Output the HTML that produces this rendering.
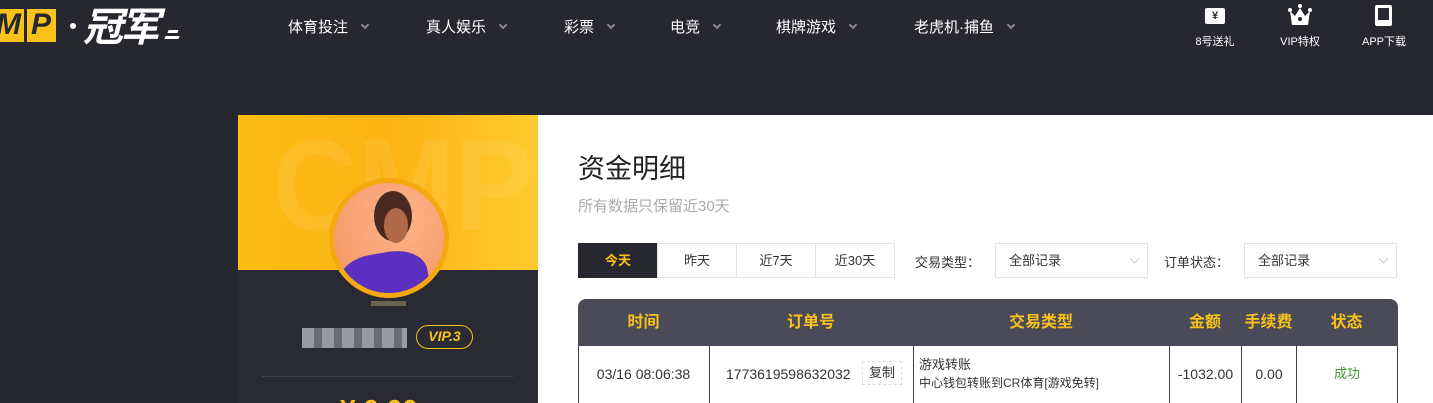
<!DOCTYPE html>
<html><head><meta charset="utf-8"><style>
*{margin:0;padding:0;box-sizing:border-box}
html,body{width:1433px;height:403px;overflow:hidden}
body{background:#272730;font-family:"Liberation Sans","Noto Sans CJK SC",sans-serif;position:relative}
.a{position:absolute}
.nav{color:#fff;font-size:15px;top:16px}
.nav i{display:inline-block;width:6px;height:6px;border-right:2px solid #888;border-bottom:2px solid #888;transform:rotate(45deg);margin-left:14px;position:relative;top:-4px}
.ico{color:#fff;font-size:11px;text-align:center;top:33px}
.btn{top:243px;height:35px;border:1px solid #e3e3e3;font-size:13px;color:#333;text-align:center;line-height:33px;background:#fff}
.sel{top:243px;height:35px;border:1px solid #e3e3e3;font-size:13px;color:#333;line-height:33px;padding-left:13px;width:153px}
.sel:after{content:"";position:absolute;right:9px;top:11px;width:6px;height:6px;border-right:1px solid #ccc;border-bottom:1px solid #ccc;transform:rotate(45deg)}
.th{top:299px;height:47px;line-height:47px;color:#f8c21a;font-weight:bold;font-size:16px;text-align:center}
.td{top:346px;height:57px;border-right:1px solid #3d3d48;font-size:14px;color:#333;text-align:center;line-height:56px}
</style></head><body>
<div class="a" style="left:0;top:9px;width:56px;height:33px;background:#f8c21a"></div>
<div class="a" style="left:-4px;top:8px;font:italic bold 30px 'Liberation Sans';color:#272730;letter-spacing:10px">MP</div>
<div class="a" style="left:24px;top:9px;width:3px;height:33px;background:#272730"></div>
<div class="a" style="left:70px;top:23px;width:6px;height:6px;border-radius:50%;background:#fff"></div>
<div class="a" style="left:83px;top:0px;font:italic bold 40px 'Noto Sans CJK SC',sans-serif;color:#fff;letter-spacing:-3px;line-height:48px">冠军</div>
<div class="a" style="left:168px;top:30px;width:10px;height:3px;background:#fff;transform:skewX(-20deg)"></div>
<div class="a" style="left:165px;top:36px;width:14px;height:3px;background:#fff;transform:skewX(-20deg)"></div>
<div class="a nav" style="left:288px">体育投注<i></i></div>
<div class="a nav" style="left:426px">真人娱乐<i></i></div>
<div class="a nav" style="left:564px">彩票<i></i></div>
<div class="a nav" style="left:670px">电竞<i></i></div>
<div class="a nav" style="left:776px">棋牌游戏<i></i></div>
<div class="a nav" style="left:914px">老虎机·捕鱼<i></i></div>
<div class="a" style="left:1205px;top:8px;width:20px;height:16px;background:#fff;border-radius:2px;color:#272730;font-size:11px;font-weight:bold;text-align:center;line-height:16px">¥</div>
<div class="a ico" style="left:1190px;width:50px">8号送礼</div>
<svg class="a" style="left:1287px;top:3px" width="26" height="24"><circle cx="13" cy="3" r="2" fill="#fff"/><circle cx="3" cy="7" r="2" fill="#fff"/><circle cx="23" cy="7" r="2" fill="#fff"/><path d="M3 8 L8 13 L13 5 L18 13 L23 8 L21 22 L5 22Z" fill="#fff"/><circle cx="13" cy="16" r="2" fill="#272730"/></svg>
<div class="a ico" style="left:1270px;width:60px">VIP特权</div>
<div class="a" style="left:1375px;top:5px;width:17px;height:21px;border:3px solid #fff;border-bottom-width:6px;border-radius:2px"></div>
<div class="a ico" style="left:1354px;width:60px">APP下载</div>

<div class="a" style="left:238px;top:115px;width:300px;height:288px;background:#2a2a33;overflow:hidden">
<div class="a" style="left:102px;top:279px;color:#f8c21a;font:bold 28px 'Liberation Sans'">¥ 0.00</div></div>
<div class="a" style="left:238px;top:115px;width:300px;height:155px;background:linear-gradient(90deg,#fbbd16,#fdb312 50%,#fecb2e);overflow:hidden">
<div class="a" style="left:35px;top:-5px;font:bold 130px 'Liberation Sans';color:rgba(255,255,255,.08);transform:scaleX(.9);transform-origin:left">CMP</div></div>
<div class="a" style="left:329px;top:178px;width:120px;height:120px;border-radius:50%;background:#f6a90e"></div>
<div class="a" style="left:334px;top:183px;width:110px;height:110px;border-radius:50%;background:radial-gradient(circle at 60% 35%,#fdb58a,#f49060);overflow:hidden">
<div class="a" style="left:40px;top:8px;width:38px;height:50px;border-radius:50%;background:#4a2a20"></div>
<div class="a" style="left:50px;top:25px;width:24px;height:35px;border-radius:50%;background:#b06a48"></div>
<div class="a" style="left:5px;top:70px;width:90px;height:60px;border-radius:40% 40% 0 0;background:#5b2fc0;transform:rotate(-10deg)"></div></div>
<div class="a" style="left:371px;top:301px;width:35px;height:5px;background:#6a6350"></div>
<div class="a" style="left:302px;top:328px;width:105px;height:20px;background:repeating-linear-gradient(90deg,#9a9aa4 0 12px,#6b6b78 12px 20px)"></div>
<div class="a" style="left:416px;top:325px;width:57px;height:24px;border:1.5px solid #f8c21a;border-radius:12px;color:#f8c21a;font:italic bold 14px 'Liberation Sans';text-align:center;line-height:21px">VIP.3</div>
<div class="a" style="left:262px;top:376px;width:251px;height:1px;background:#43434d"></div>

<div class="a" style="left:538px;top:115px;width:895px;height:288px;background:#fff"></div>
<div class="a" style="left:578px;top:147px;font-size:27px;color:#222">资金明细</div>
<div class="a" style="left:578px;top:195px;font-size:15px;color:#aaa">所有数据只保留近30天</div>
<div class="a btn" style="left:578px;width:80px;background:#272730;color:#f8c21a;border-color:#272730;font-weight:bold">今天</div>
<div class="a btn" style="left:657px;width:80px">昨天</div>
<div class="a btn" style="left:736px;width:80px">近7天</div>
<div class="a btn" style="left:815px;width:80px">近30天</div>
<div class="a" style="left:915px;top:252px;font-size:13px;color:#333">交易类型：</div>
<div class="a sel" style="left:995px">全部记录</div>
<div class="a" style="left:1164px;top:252px;font-size:13px;color:#333">订单状态：</div>
<div class="a sel" style="left:1244px">全部记录</div>

<div class="a" style="left:578px;top:299px;width:820px;height:47px;background:#4a4a58;border-radius:8px 8px 0 0"></div>
<div class="a th" style="left:578px;width:131px">时间</div>
<div class="a th" style="left:709px;width:204px">订单号</div>
<div class="a th" style="left:913px;width:256px">交易类型</div>
<div class="a th" style="left:1169px;width:72px">金额</div>
<div class="a th" style="left:1241px;width:55px">手续费</div>
<div class="a th" style="left:1296px;width:101px">状态</div>
<div class="a" style="left:578px;top:346px;width:820px;height:57px;border-left:1px solid #3d3d48;border-right:1px solid #3d3d48"></div>
<div class="a td" style="left:578px;width:132px">03/16 08:06:38</div>
<div class="a td" style="left:710px;width:204px;text-align:left;padding-left:16px">1773619598632032</div>
<div class="a" style="left:862px;top:361px;width:40px;height:24px;border:1px dashed #ddd;font-size:13px;color:#333;text-align:center;line-height:22px">复制</div>
<div class="a td" style="left:914px;width:256px;text-align:left;padding-left:5px;line-height:18px;padding-top:10px;font-size:13px">游戏转账<br><span style="font-size:12px">中心钱包转账到CR体育[游戏免转]</span></div>
<div class="a td" style="left:1170px;width:72px">-1032.00</div>
<div class="a td" style="left:1242px;width:55px">0.00</div>
<div class="a td" style="left:1297px;width:100px;border:none;color:#3a9a2a;font-size:13px">成功</div>
</body></html>
